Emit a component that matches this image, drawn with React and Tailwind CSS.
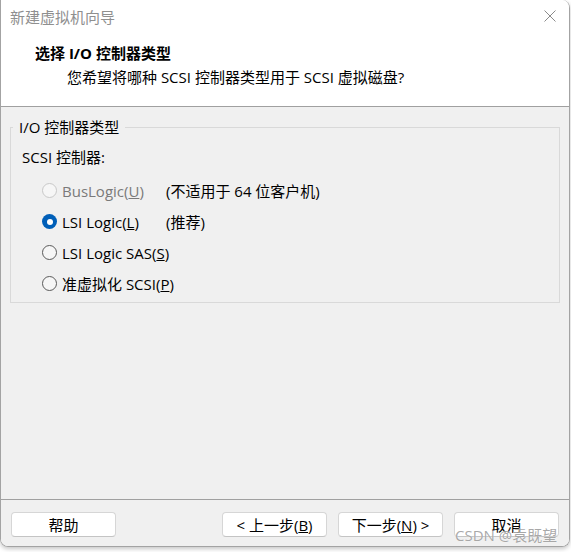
import React from 'react';

const font = { fontFamily: '"Segoe UI", "Open Sans", "Noto Sans CJK SC", sans-serif' };

const Radio = ({ checked, disabled }) => {
  if (checked) {
    return (
      <span className="w-[15px] h-[15px] rounded-full bg-[#005fb8] flex items-center justify-center shrink-0">
        <span className="w-[6px] h-[6px] rounded-full bg-white" />
      </span>
    );
  }
  return (
    <span
      className={
        disabled
          ? 'w-[15px] h-[15px] rounded-full border border-[#c8c8c8] bg-[#f6f6f6] shrink-0'
          : 'w-[15px] h-[15px] rounded-full border border-[#5a5a5a] bg-[#f6f6f6] shrink-0'
      }
    />
  );
};

const options = [
  { label: 'BusLogic', key: 'U', note: '(不适用于 64 位客户机)', disabled: true },
  { label: 'LSI Logic', key: 'L', note: '(推荐)', checked: true },
  { label: 'LSI Logic SAS', key: 'S' },
  { label: '准虚拟化 SCSI', key: 'P' },
];

const Button = ({ children }) => (
  <button className="w-[105px] h-[25px] bg-white border border-[#d6d6d6] border-b-[#c4c4c4] rounded-[4px] text-[15px] leading-[20px] text-black flex items-center justify-center">
    {children}
  </button>
);

export default function App() {
  return (
    <div className="w-[571px] h-[552px] bg-white relative" style={font}>
      <div className="w-[570px] h-[547px] border-x border-b border-[#a3a3a3] rounded-b-[8px] rounded-tr-[8px] overflow-hidden flex flex-col shadow-[0_2px_4px_rgba(0,0,0,0.22)]">
        <div className="h-[106px] bg-white shrink-0">
          <div className="h-[33px] flex items-center justify-between pl-[9px] pr-[13px]">
            <span className="text-[15px] leading-[20px] text-[#8f8f8f]">新建虚拟机向导</span>
            <svg width="12" height="12" viewBox="0 0 12 12" className="mt-[-1px]">
              <path d="M0.5 0.5 L11.5 11.5 M11.5 0.5 L0.5 11.5" stroke="#8a8a8a" strokeWidth="1" fill="none" />
            </svg>
          </div>
          <div className="pl-[34px] pt-[10px]">
            <div className="text-[15px] leading-[20px] font-bold text-black">选择 I/O 控制器类型</div>
            <div className="pl-[32px] mt-[4px] text-[15px] leading-[20px] text-black">
              您希望将哪种 SCSI 控制器类型用于 SCSI 虚拟磁盘?
            </div>
          </div>
        </div>
        <div className="border-t border-[#a0a0a0] bg-[#f0f0f0] flex-1 px-[9px] pt-[10px]">
          <fieldset className="border border-[#d9d9d9] px-0 pb-[3px]">
            <legend className="ml-[2px] px-[6px] text-[15px] leading-[20px] text-black">I/O 控制器类型</legend>
            <div className="px-[11px]">
              <div className="mt-[10px] text-[15px] leading-[20px] text-black">SCSI 控制器:</div>
              <div className="mt-[8px] flex flex-col">
                {options.map((o) => (
                  <div key={o.key} className="h-[31px] flex items-center ml-[20px]">
                    <div className="w-[124px] flex items-center gap-[5px]">
                      <Radio checked={o.checked} disabled={o.disabled} />
                      <span
                        className={
                          o.disabled
                            ? 'text-[15px] leading-[20px] text-[#7a7a7a] whitespace-nowrap'
                            : 'text-[15px] leading-[20px] text-black whitespace-nowrap'
                        }
                      >
                        {o.label}(<span className="underline">{o.key}</span>)
                      </span>
                    </div>
                    {o.note && (
                      <span className="text-[15px] leading-[20px] text-black whitespace-nowrap">{o.note}</span>
                    )}
                  </div>
                ))}
              </div>
            </div>
          </fieldset>
        </div>
        <div className="h-[47px] border-t border-[#a0a0a0] bg-[#f0f0f0] shrink-0 flex items-start justify-between px-[10px] pt-[12px]">
          <Button>帮助</Button>
          <div className="flex gap-[11px]">
            <Button>
              &lt; 上一步(<span className="underline">B</span>)
            </Button>
            <Button>
              下一步(<span className="underline">N</span>) &gt;
            </Button>
            <Button>取消</Button>
          </div>
        </div>
      </div>
      <div className="absolute left-[455px] top-[525px] text-[15px] leading-[20px] text-[rgba(140,140,140,0.75)] whitespace-nowrap [text-shadow:0_0_1px_rgba(255,255,255,0.9)]">
        CSDN @袁既望
      </div>
    </div>
  );
}
